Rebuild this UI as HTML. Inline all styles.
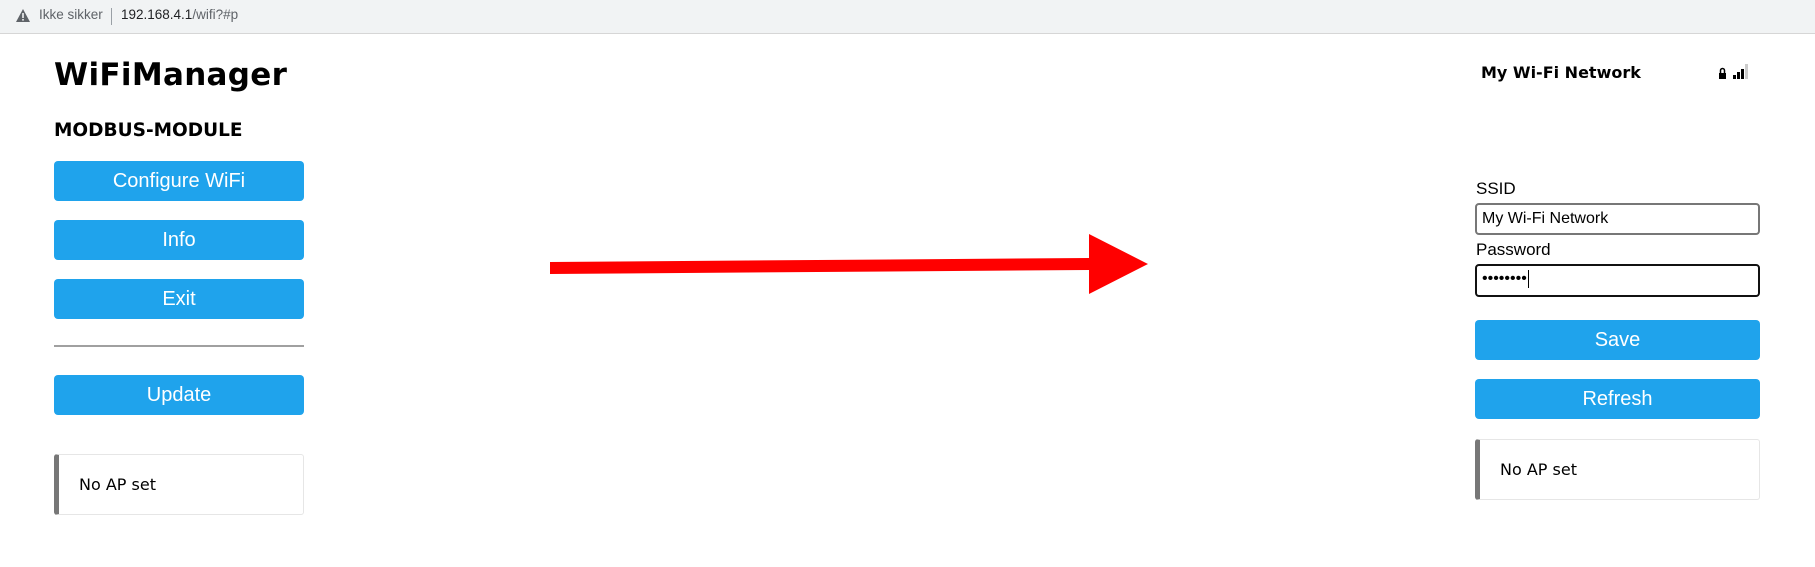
<!DOCTYPE html>
<html><head><meta charset="utf-8"><style>
body{margin:0;width:1815px;height:567px;background:#fff;position:relative;overflow:hidden;font-family:"DejaVu Sans",Verdana,sans-serif}
.abs{position:absolute}
.bar{left:0;top:0;width:1815px;height:34px;background:#f1f3f4;border-bottom:1px solid #d6d6d6;box-sizing:border-box}
.btn{position:absolute;background:#1fa3ec;color:#fff;border-radius:4px;font-family:"Liberation Sans",Arial,sans-serif;font-size:20px;text-align:center;box-sizing:border-box}
.msg{position:absolute;border:1px solid #e6e6e6;border-left:5px solid #777;border-radius:3px;box-sizing:border-box;font-size:16px;color:#000}
.inp{position:absolute;border:2px solid #777;border-radius:4px;box-sizing:border-box;font-family:"Liberation Sans",Arial,sans-serif;font-size:16px}
.lbl{position:absolute;font-family:"Liberation Sans",Arial,sans-serif;font-size:17px}
</style></head><body>
<div class="abs bar"></div>
<svg class="abs" style="left:16px;top:9px" width="14" height="13" viewBox="0 0 14 13"><path d="M7 0 L14 13 L0 13Z" fill="#5f6368"/><rect x="6.2" y="4" width="1.6" height="5" fill="#f1f3f4"/><rect x="6.2" y="10" width="1.6" height="1.6" fill="#f1f3f4"/></svg>
<div class="abs" style="left:39px;top:7px;font-family:'Liberation Sans',Arial,sans-serif;font-size:13.5px;color:#5f6368">Ikke sikker</div>
<div class="abs" style="left:111px;top:8px;width:1px;height:17px;background:#9aa0a6"></div>
<div class="abs" style="left:121px;top:7px;font-family:'Liberation Sans',Arial,sans-serif;font-size:13.5px;color:#202124">192.168.4.1<span style="color:#5f6368">/wifi?#p</span></div>

<div class="abs" style="left:54px;top:57px;font-size:31px;font-weight:bold;letter-spacing:0.3px">WiFiManager</div>
<div class="abs" style="left:54px;top:120px;font-size:18.5px;font-weight:bold">MODBUS-MODULE</div>
<div class="btn" style="left:54px;top:161px;width:250px;height:40px;line-height:40px">Configure WiFi</div>
<div class="btn" style="left:54px;top:220px;width:250px;height:40px;line-height:40px">Info</div>
<div class="btn" style="left:54px;top:279px;width:250px;height:40px;line-height:40px">Exit</div>
<div class="abs" style="left:54px;top:345px;width:250px;height:2px;background:#a0a0a0"></div>
<div class="btn" style="left:54px;top:375px;width:250px;height:40px;line-height:40px">Update</div>
<div class="msg" style="left:54px;top:454px;width:250px;height:61px;padding:20px 0 0 20px">No AP set</div>

<svg class="abs" style="left:0;top:0" width="1815" height="567"><polygon points="550,262 1089,258 1089,234 1148,264 1089,294 1089,270 550,274" fill="#ff0000"/></svg>

<div class="abs" style="left:1481px;top:63px;font-size:16px;font-weight:bold">My Wi-Fi Network</div>
<svg class="abs" style="left:1718px;top:62px" width="32" height="18"><rect x="1" y="11" width="7" height="6" fill="#000"/><path d="M2.5 11 V8.5 a2 2 0 0 1 4 0 V11" stroke="#000" stroke-width="1.5" fill="none"/><rect x="15" y="13" width="3" height="4" fill="#000"/><rect x="19" y="10" width="3" height="7" fill="#000"/><rect x="23" y="7" width="3" height="10" fill="#000"/><rect x="27" y="2" width="3" height="15" fill="#ccc"/></svg>

<div class="lbl" style="left:1476px;top:179px">SSID</div>
<div class="inp" style="left:1475px;top:203px;width:285px;height:32px;padding:5px 0 0 5px">My Wi-Fi Network</div>
<div class="lbl" style="left:1476px;top:240px">Password</div>
<div class="inp" style="left:1475px;top:264px;width:285px;height:33px;border-color:#111;padding:4px 0 0 5px;font-size:16px">••••••••<span style="display:inline-block;width:1px;height:18px;background:#000;vertical-align:middle;margin-left:1px"></span></div>
<div class="btn" style="left:1475px;top:320px;width:285px;height:40px;line-height:40px">Save</div>
<div class="btn" style="left:1475px;top:379px;width:285px;height:40px;line-height:40px">Refresh</div>
<div class="msg" style="left:1475px;top:439px;width:285px;height:61px;padding:20px 0 0 20px">No AP set</div>
</body></html>
